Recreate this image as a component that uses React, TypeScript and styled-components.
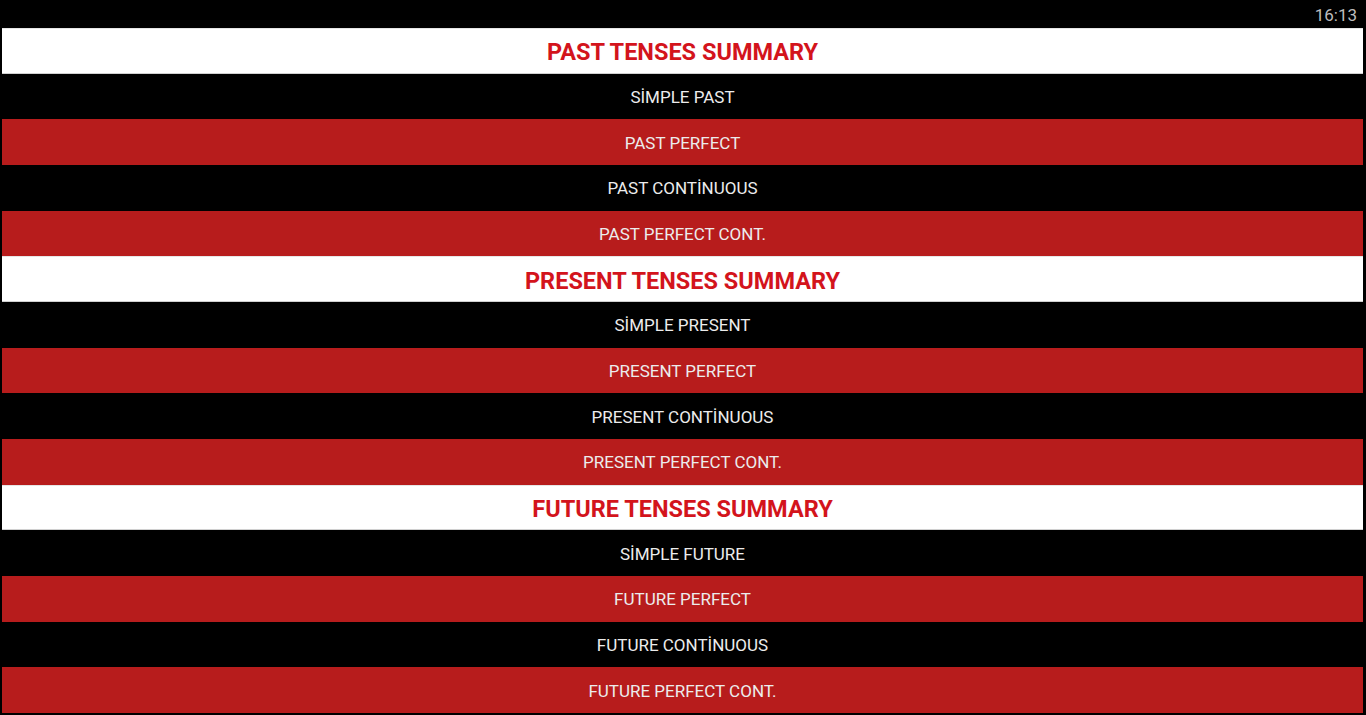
import React from "react";
import styled, { createGlobalStyle } from "styled-components";

const GlobalStyle = createGlobalStyle`
  html, body {
    margin: 0;
    padding: 0;
    background: #000;
    font-family: Roboto, "Noto Sans", Arial, sans-serif;
  }
  #root {
    width: 1366px;
    height: 715px;
    overflow: hidden;
  }
`;

const Screen = styled.div`
  width: 1366px;
  height: 715px;
  background: #000;
  display: flex;
  flex-direction: column;
`;

const StatusBar = styled.div`
  height: 28px;
  flex: 0 0 28px;
  display: flex;
  align-items: center;
  justify-content: flex-end;
  padding-right: 9px;
  padding-top: 1px;
  box-sizing: border-box;
  color: #bdbdbd;
  font-size: 17px;
  font-family: Roboto, sans-serif;
`;

const List = styled.div`
  height: 685px;
  margin: 0 3px 0 2px;
  display: grid;
  grid-template-rows: repeat(15, 1fr);
`;

type RowKind = "header" | "dark" | "red";

const Row = styled.div<{ $kind: RowKind }>`
  display: flex;
  align-items: center;
  justify-content: center;
  background: ${(p) =>
    p.$kind === "header" ? "#ffffff" : p.$kind === "red" ? "#b71c1c" : "#000000"};
  color: ${(p) => (p.$kind === "header" ? "#d3141c" : "#ececec")};
  font-size: ${(p) => (p.$kind === "header" ? "23.5px" : "17px")};
  font-weight: ${(p) => (p.$kind === "header" ? 700 : 400)};
  border-top: ${(p) => (p.$kind === "header" ? "1px solid #e6e6e6" : "none")};
  border-bottom: ${(p) => (p.$kind === "header" ? "1px solid #d0d0d0" : "none")};
  box-sizing: border-box;
  padding-top: ${(p) => (p.$kind === "header" ? "3px" : "1px")};
`;

const sections = [
  {
    title: "PAST TENSES SUMMARY",
    items: ["SİMPLE PAST", "PAST PERFECT", "PAST CONTİNUOUS", "PAST PERFECT CONT."],
  },
  {
    title: "PRESENT TENSES SUMMARY",
    items: ["SİMPLE PRESENT", "PRESENT PERFECT", "PRESENT CONTİNUOUS", "PRESENT PERFECT CONT."],
  },
  {
    title: "FUTURE TENSES SUMMARY",
    items: ["SİMPLE FUTURE", "FUTURE PERFECT", "FUTURE CONTİNUOUS", "FUTURE PERFECT CONT."],
  },
];

export default function App() {
  return (
    <>
      <GlobalStyle />
      <Screen>
        <StatusBar>16:13</StatusBar>
        <List>
          {sections.map((s) => (
            <React.Fragment key={s.title}>
              <Row $kind="header">{s.title}</Row>
              {s.items.map((it, i) => (
                <Row key={it} $kind={i % 2 === 0 ? "dark" : "red"}>
                  {it}
                </Row>
              ))}
            </React.Fragment>
          ))}
        </List>
      </Screen>
    </>
  );
}
